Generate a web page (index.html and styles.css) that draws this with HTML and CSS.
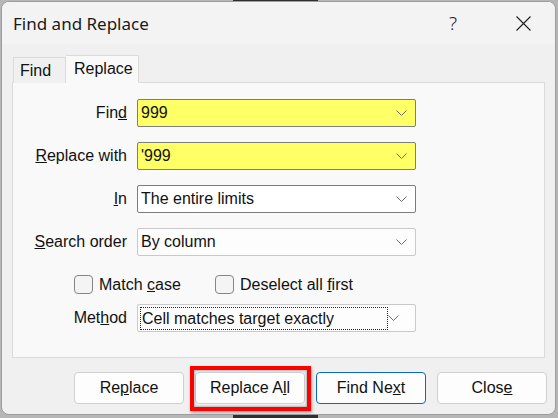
FILE: index.html
```html
<!DOCTYPE html>
<html lang="en">
<head>
  <meta charset="UTF-8" />
  <title>Find and Replace</title>
  <link rel="stylesheet" href="styles.css">
</head>
<body>

  <div class="dialog">
    <div class="titlebar">
      <span class="title">Find and Replace</span>
      <span class="cap-btn help">?</span>
      <span class="cap-btn close">
        <svg width="15" height="15" viewBox="0 0 15 15"><path d="M0.5 0.5 L14.5 14.5 M14.5 0.5 L0.5 14.5" stroke="#1f1f1f" stroke-width="1.1" fill="none"/></svg>
      </span>
    </div>

    <div class="content">
      <div class="tabs">
        <div class="tab">Find</div>
        <div class="tab active">Replace</div>
      </div>

      <div class="panel">
        <div class="row">
          <label class="lbl">Fin<u>d</u></label>
          <div class="combo dark hl"><span class="val">999</span><svg class="chev" width="11" height="6" viewBox="0 0 11 6"><polyline points="0.5,0.5 5.5,5.5 10.5,0.5" fill="none" stroke="#6b6b6b" stroke-width="1"/></svg></div>
        </div>
        <div class="row">
          <label class="lbl"><u>R</u>eplace with</label>
          <div class="combo dark hl"><span class="val">'999</span><svg class="chev" width="11" height="6" viewBox="0 0 11 6"><polyline points="0.5,0.5 5.5,5.5 10.5,0.5" fill="none" stroke="#6b6b6b" stroke-width="1"/></svg></div>
        </div>
        <div class="row">
          <label class="lbl"><u>I</u>n</label>
          <div class="combo dark"><span class="val">The entire limits</span><svg class="chev" width="11" height="6" viewBox="0 0 11 6"><polyline points="0.5,0.5 5.5,5.5 10.5,0.5" fill="none" stroke="#6b6b6b" stroke-width="1"/></svg></div>
        </div>
        <div class="row">
          <label class="lbl"><u>S</u>earch order</label>
          <div class="combo"><span class="val">By column</span><svg class="chev" width="11" height="6" viewBox="0 0 11 6"><polyline points="0.5,0.5 5.5,5.5 10.5,0.5" fill="none" stroke="#6b6b6b" stroke-width="1"/></svg></div>
        </div>

        <div class="checks">
          <label class="check first"><span class="box"></span><span>Match <u>c</u>ase</span></label>
          <label class="check"><span class="box"></span><span>Deselect all <u>f</u>irst</span></label>
        </div>

        <div class="row method">
          <label class="lbl">Met<u>h</u>od</label>
          <div class="combo"><span class="val focus">Cell matches target exactly</span><svg class="chev" width="11" height="6" viewBox="0 0 11 6"><polyline points="0.5,0.5 5.5,5.5 10.5,0.5" fill="none" stroke="#6b6b6b" stroke-width="1"/></svg></div>
        </div>
      </div>

      <div class="buttons">
        <button>Re<u>p</u>lace</button>
        <button class="marked">Replace A<u>l</u>l</button>
        <button class="default">Find Ne<u>x</u>t</button>
        <button>Clos<u>e</u></button>
      </div>
    </div>
  </div>

</body>
</html>
```

FILE: styles.css
```css
html, body {
  margin: 0;
  height: 100%;
}

body {
  background: linear-gradient(to right, #b6b6b6 233px, #2f2f2f 233px, #2f2f2f 318px, #b6b6b6 318px);
  font-family: "Liberation Sans", Arial, sans-serif;
  font-size: 16px;
  color: #111;
  overflow: hidden;
}

.dialog {
  box-sizing: border-box;
  width: 555px;
  height: 414px;
  margin: 1px 0 0 1px;
  border: 1px solid #9d9d9d;
  border-radius: 8px;
  background: #f0f0f0;
  overflow: hidden;
  display: flex;
  flex-direction: column;
}

/* caption bar */
.titlebar {
  height: 42px;
  flex: none;
  display: flex;
  align-items: center;
  padding-left: 11px;
  background: #f3f3f3;
}

.title {
  font-family: "Noto Sans", sans-serif;
  font-size: 17px;
  color: #1a1a1a;
}

.cap-btn {
  width: 46px;
  height: 30px;
  display: flex;
  align-items: center;
  justify-content: center;
}

.help {
  margin-left: auto;
  font-family: "Noto Sans", sans-serif;
  font-size: 19px;
  color: #222;
  font-weight: 300;
  padding-right: 6px;
}

.close {
  margin-left: 18px;
  margin-right: 9px;
}

.content {
  flex: 1;
  display: flex;
  flex-direction: column;
}

/* tabs */
.tabs {
  display: flex;
  align-items: flex-end;
  padding-left: 11px;
  margin-top: 11px;
  margin-bottom: -1px;
  position: relative;
  z-index: 1;
}

.tab {
  box-sizing: border-box;
  width: 53px;
  height: 26px;
  line-height: 25px;
  padding-left: 6px;
  border: 1px solid #dadada;
  border-bottom: none;
  background: #f0f0f0;
}

.tab.active {
  width: 73px;
  height: 28px;
  line-height: 25px;
  padding-left: 8px;
  background: #f9f9f9;
  border-left: none;
  border-bottom: 1px solid #f9f9f9;
}

/* form panel */
.panel {
  margin: 0 10px;
  height: 276px;
  box-sizing: border-box;
  border: 1px solid #dadada;
  background: #f9f9f9;
  padding-top: 16px;
}

.row {
  display: grid;
  grid-template-columns: 114px 279px;
  column-gap: 10px;
  align-items: center;
  margin-top: 15px;
}

.row:first-child {
  margin-top: 0;
}

.lbl {
  text-align: right;
}

.combo {
  box-sizing: border-box;
  height: 28px;
  display: flex;
  align-items: center;
  padding: 0 8px 0 3px;
  border: 1px solid #c9c9c9;
  border-radius: 2px;
  background: #fdfdfd;
}

.combo.dark {
  border-color: #7d7d7d;
  background: #fff;
}

.combo.hl {
  background: #ffff66;
}

.val {
  flex: 1;
}

.val.focus {
  flex: none;
  box-sizing: border-box;
  width: 248px;
  height: 23px;
  line-height: 21px;
  padding-left: 1px;
  margin-left: -1px;
  border: 1px dotted #222;
}

.chev {
  flex: none;
}

/* checkboxes */
.checks {
  display: flex;
  margin-top: 19px;
  padding-left: 61px;
  height: 19px;
  align-items: center;
}

.check {
  display: flex;
  align-items: center;
}

.check.first {
  width: 141px;
}

.box {
  box-sizing: border-box;
  width: 19px;
  height: 19px;
  margin-right: 6px;
  border: 1px solid #858585;
  border-radius: 4px;
  background: #f4f4f4;
}

.row.method {
  margin-top: 10px;
}

/* bottom buttons */
.buttons {
  display: flex;
  justify-content: flex-end;
  gap: 11px;
  margin-top: 14px;
  padding-right: 8px;
}

button {
  box-sizing: border-box;
  width: 110px;
  height: 32px;
  font-family: "Liberation Sans", Arial, sans-serif;
  font-size: 16px;
  color: #111;
  background: #fdfdfd;
  border: 1px solid #d0d0d0;
  border-radius: 4px;
  padding: 0;
}

button.default {
  border-color: #0a67c4;
}

button.marked {
  position: relative;
}

/* red highlight frame drawn over the button */
button.marked::after {
  content: "";
  position: absolute;
  left: -6px;
  right: -7px;
  top: -7px;
  bottom: -8px;
  border: 4px solid #ff0000;
  box-shadow: inset 0 0 2px 1px rgba(0, 0, 0, 0.25), 1px 2px 3px rgba(0, 0, 0, 0.3);
}
```
